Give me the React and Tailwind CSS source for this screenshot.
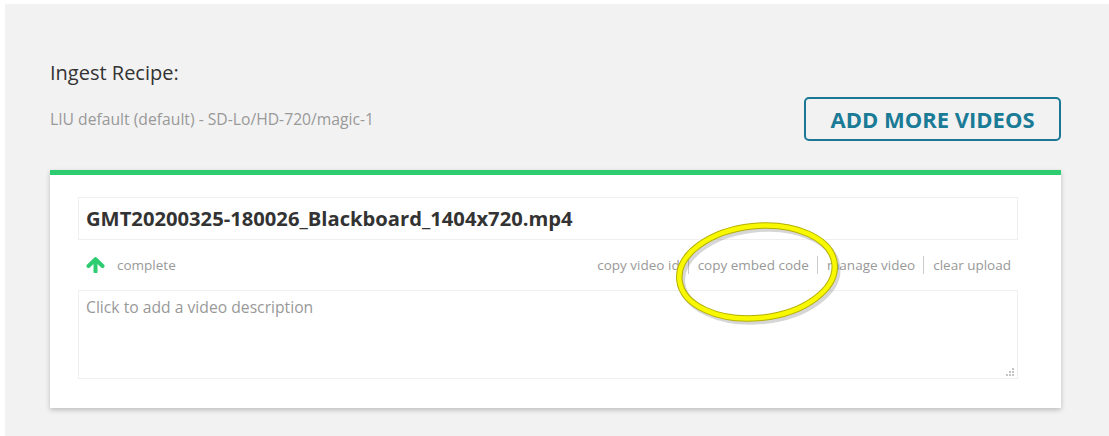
import React from 'react'

const ArrowUp = () => (
    <svg width="19" height="16" viewBox="0 0 19 16" className="text-[#2ecc71]">
        <path d="M9.5 14.5V3" stroke="currentColor" strokeWidth="4" strokeLinecap="round" fill="none" />
        <path d="M2.5 9L9.5 2.2L16.5 9" stroke="currentColor" strokeWidth="4" strokeLinecap="round" strokeLinejoin="round" fill="none" />
    </svg>
)

const ResizeGrip = () => (
    <svg width="8" height="8" viewBox="0 0 8 8" className="absolute right-[3px] bottom-[2px]">
        <rect x="6" y="0" width="2" height="2" fill="#c4c4c4" />
        <rect x="3" y="3" width="2" height="2" fill="#c4c4c4" />
        <rect x="6" y="3" width="2" height="2" fill="#c4c4c4" />
        <rect x="0" y="6" width="2" height="2" fill="#c4c4c4" />
        <rect x="3" y="6" width="2" height="2" fill="#c4c4c4" />
        <rect x="6" y="6" width="2" height="2" fill="#c4c4c4" />
    </svg>
)

// yellow marker ring drawn over the action links
const Highlight = () => (
    <svg width="220" height="130" viewBox="0 0 220 130" className="absolute left-[647px] top-[208px] pointer-events-none">
        <g transform="rotate(-6 110 64)">
            <ellipse cx="112" cy="67" rx="78" ry="46" fill="none" stroke="rgba(0,0,0,0.16)" strokeWidth="7" />
            <ellipse cx="110" cy="64" rx="78" ry="46" fill="none" stroke="#b5b000" strokeWidth="6.5" />
            <ellipse cx="110" cy="64" rx="78" ry="46" fill="none" stroke="#f8f800" strokeWidth="4.5" />
        </g>
    </svg>
)

const links = ['copy video id', 'copy embed code', 'manage video', 'clear upload']

export default function App() {
    return (
        <div className="relative bg-white pl-[5px] pt-[4px] font-['Open_Sans',sans-serif]">
            <div className="bg-[#f2f2f2] h-[432px] pl-[45px] pr-[48px] pt-[56px]">
                {/* Recipe header */}
                <div className="flex justify-between items-start">
                    <div>
                        <div className="text-[20px] leading-[26px] text-[#333]">Ingest Recipe:</div>
                        <div className="mt-[23px] text-[15.7px] leading-[20px] text-[#999]">
                            LIU default (default) - SD-Lo/HD-720/magic-1
                        </div>
                    </div>
                    <button className="mt-[37px] w-[257px] h-[44px] rounded-[5px] border-2 border-[#1a7896] text-[#1a7b96] text-[22px] font-bold">
                        ADD MORE VIDEOS
                    </button>
                </div>

                {/* Upload card */}
                <div className="mt-[29px] bg-white border-t-[5px] border-[#2ecc71] shadow-[0_2px_5px_rgba(0,0,0,0.22)] pl-[28px] pr-[43px] pt-[22px] pb-[29px]">
                    <div className="h-[43px] border border-[#efefef] flex items-center pl-[7px] text-[20.2px] font-bold text-[#333]">
                        GMT20200325-180026_Blackboard_1404x720.mp4
                    </div>
                    <div className="h-[50px] flex items-center justify-between pl-[8px] pr-[7px]">
                        <div className="flex items-center">
                            <ArrowUp />
                            <span className="ml-[12px] text-[13.5px] text-[#999]">complete</span>
                        </div>
                        <div className="flex items-center text-[13.5px] text-[#999]">
                            {links.map((l, i) => (
                                <span
                                    key={l}
                                    className={i === 0 ? 'leading-[18px]' : 'leading-[18px] ml-[8px] pl-[9px] border-l border-[#ccc]'}
                                >
                                    {l}
                                </span>
                            ))}
                        </div>
                    </div>
                    <div className="relative h-[89px] border border-[#efefef] pl-[7px] pt-[5px] text-[15.7px] text-[#999]">
                        Click to add a video description
                        <ResizeGrip />
                    </div>
                </div>
            </div>
            <Highlight />
        </div>
    )
}
